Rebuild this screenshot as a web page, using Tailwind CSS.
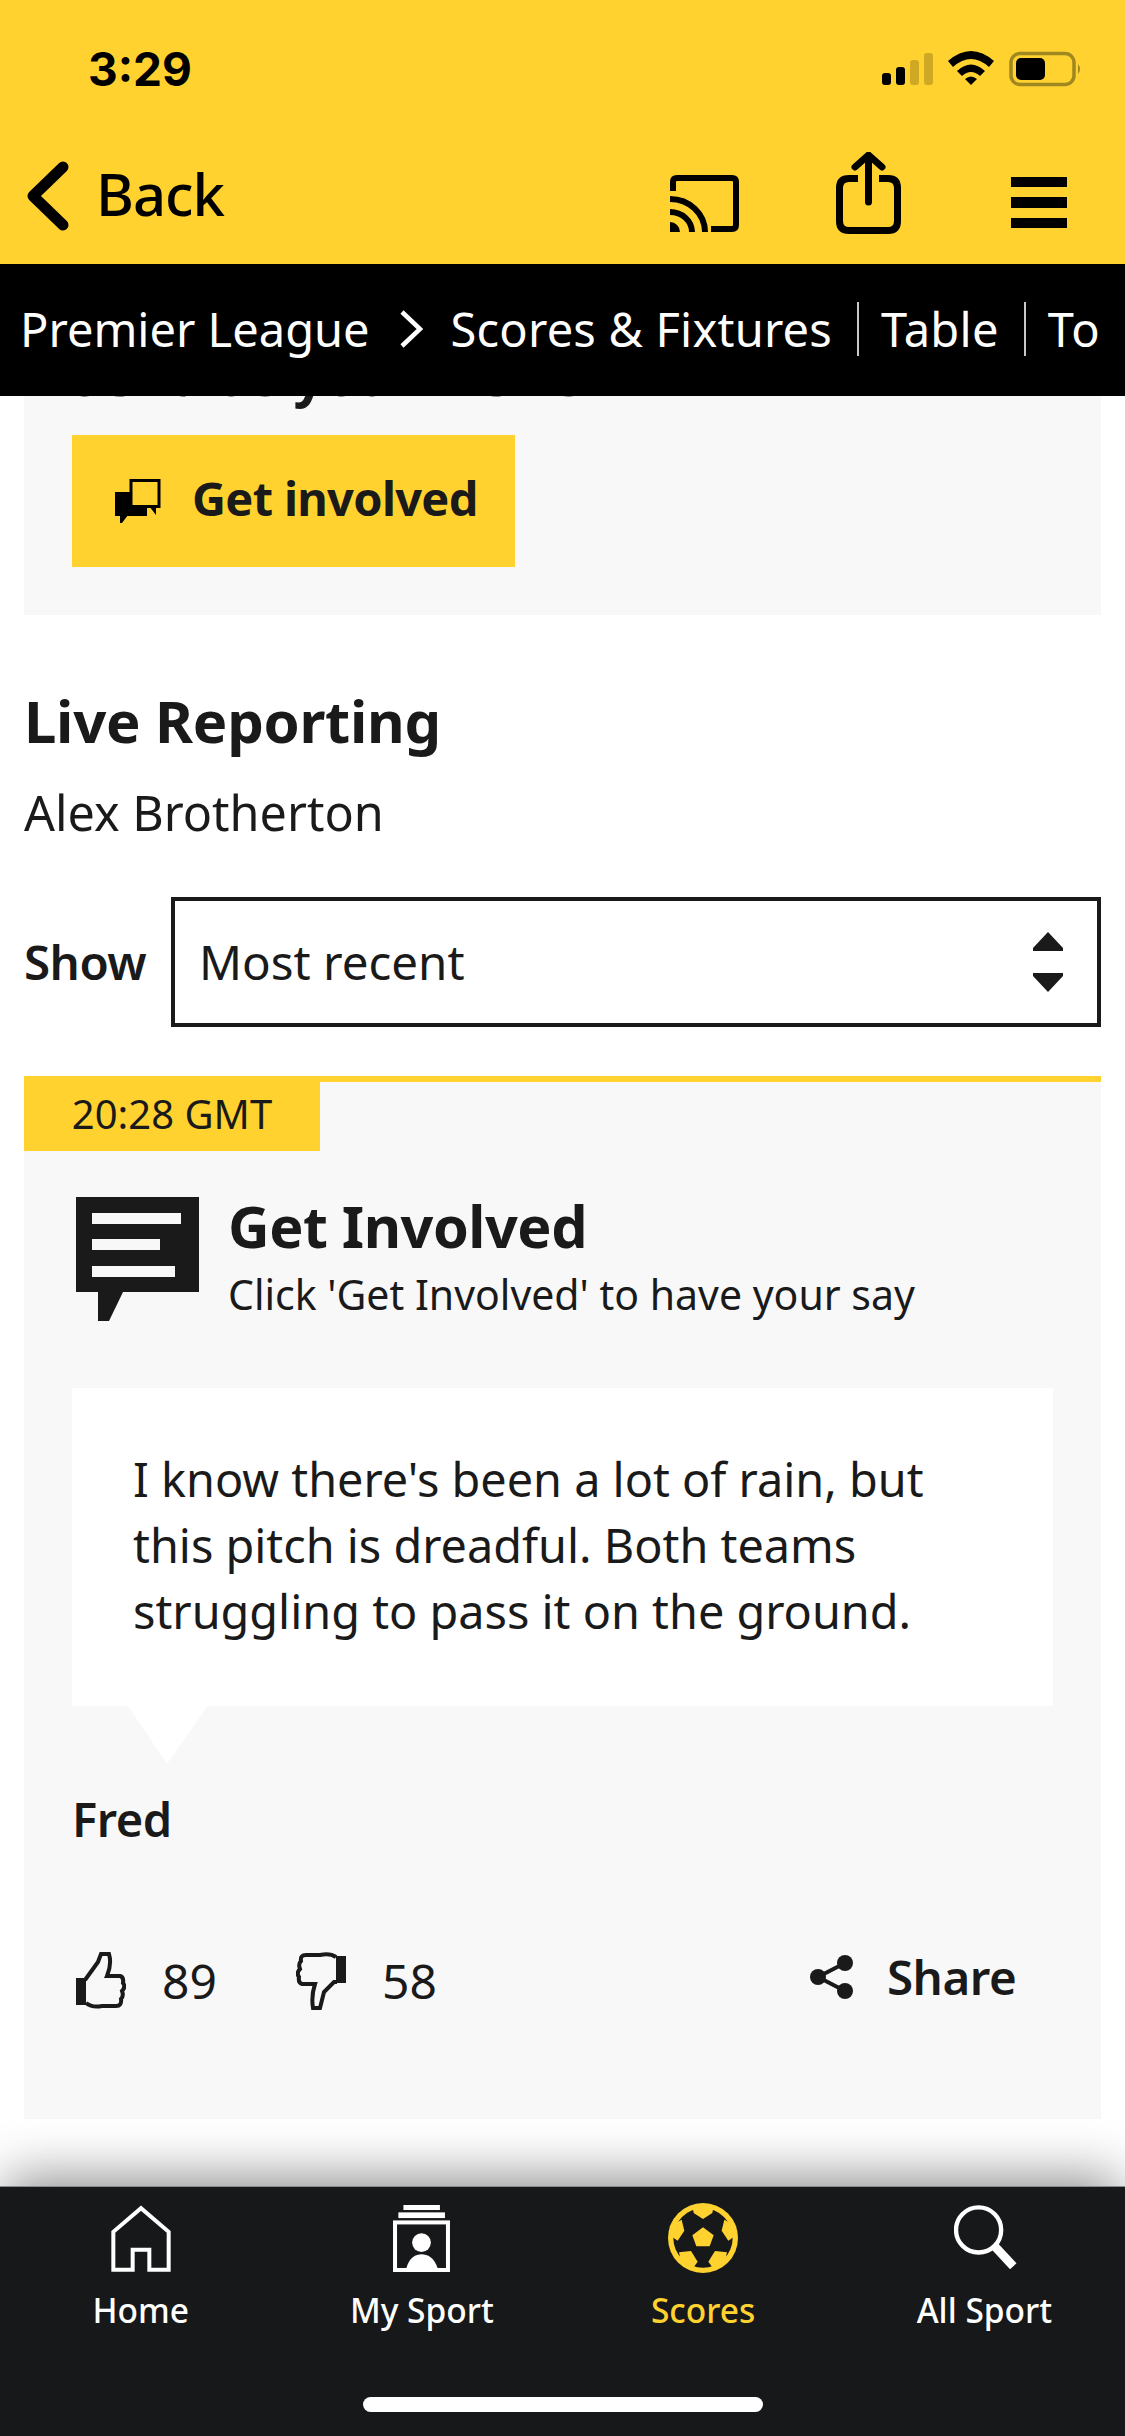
<!DOCTYPE html>
<html lang="en">
  <head>
    <meta charset="UTF-8" />
    <meta name="viewport" content="width=device-width, initial-scale=1.0" />
    <script src="https://cdn.jsdelivr.net/npm/@tailwindcss/browser@4"></script>
    <title>Live Reporting</title>
  </head>
  <body>
    <div class="flex h-[2436px] w-[1125px] flex-col overflow-hidden bg-white font-['Noto_Sans',sans-serif] text-[#1a1a1a]">
      <!-- Yellow app header -->
      <header class="z-20 h-[264px] shrink-0 bg-[#ffd230] text-black">
        <div class="flex h-[132px] items-start justify-between">
          <span class="ml-[88px] mt-[43px] font-['Inter',sans-serif] text-[46px] font-bold leading-[52px]">3:29</span>
          <svg class="mr-[43px] mt-[50px]" width="203" height="38" viewBox="879 50 203 38">
            <rect x="882" y="73" width="9" height="12" rx="3" />
            <rect x="896" y="67" width="9" height="18" rx="3" />
            <rect x="910" y="60" width="9" height="25" rx="3" fill="#cfa924" />
            <rect x="924" y="53" width="9" height="32" rx="3" fill="#cfa924" />
            <path d="M948 61 Q971 41 994 61 L989 67 Q971 51 953 67 Z" />
            <path d="M957 71 Q971 58 985 71 L980 76 Q971 68 962 76 Z" />
            <path d="M965 79 Q971 74 977 79 L971 85 Z" />
            <rect x="1011" y="53.5" width="63" height="31" rx="9" fill="none" stroke="#a08820" stroke-width="3.5" />
            <rect x="1016" y="58" width="29" height="22" rx="5" />
            <path d="M1078 64 Q1082 69 1078 74 Z" fill="#a08820" />
          </svg>
        </div>
        <div class="flex h-[132px] items-start">
          <svg class="ml-[27px] mt-[29px]" width="42" height="70" viewBox="0 0 42 70" fill="none" stroke="black" stroke-width="11" stroke-linecap="round" stroke-linejoin="round">
            <path d="M36 6 L6 35 L36 64" />
          </svg>
          <span class="ml-[27px] mt-[27px] w-[129px] text-[58px] font-medium leading-[70px] tracking-[-1px]">Back</span>
          <svg class="ml-[445px] mt-[43px]" width="70" height="58" viewBox="671 175 70 58">
            <path d="M674 191 V182 Q674 178 678 178 H733 Q737 178 737 182 V225 Q737 229 733 229 H712" fill="none" stroke="black" stroke-width="6" />
            <path d="M671 199 A35 33 0 0 1 706 232" fill="none" stroke="black" stroke-width="6" />
            <path d="M671 212 A22 20 0 0 1 693 232" fill="none" stroke="black" stroke-width="6" />
            <path d="M671 222 A10 10 0 0 1 681 232 H671 Z" />
          </svg>
          <svg class="ml-[96px] mt-[20px]" width="66" height="84" viewBox="838 152 66 84" fill="none" stroke="black" stroke-width="7" stroke-linecap="round" stroke-linejoin="round">
            <path d="M860 178.500 H851 Q841.500 178.500 841.500 188 V221 Q841.500 230.500 851 230.500 H890 Q899.500 230.500 899.500 221 V188 Q899.500 178.500 890 178.500 H881" stroke-linecap="butt" />
            <path d="M870.500 202 V156 M857 167 L870.500 155 L884 167" />
          </svg>
          <div class="ml-[109px] mt-[45px] flex w-[56px] flex-col gap-[10px]">
            <div class="h-[10px] bg-black"></div>
            <div class="h-[11px] bg-black"></div>
            <div class="h-[10px] bg-black"></div>
          </div>
        </div>
      </header>

      <!-- Section breadcrumb -->
      <nav class="z-20 flex h-[132px] shrink-0 items-center whitespace-nowrap bg-black pb-[3px] text-[47px] leading-[60px] text-white">
        <span class="ml-[20px]">Premier League</span>
        <svg class="ml-[29px]" width="24" height="38" viewBox="0 0 24 38" fill="none" stroke="white" stroke-width="4.500">
          <path d="M3 2 L21 19 L3 36" />
        </svg>
        <span class="ml-[28px] tracking-[0.2px]">Scores &amp; Fixtures</span>
        <div class="ml-[25px] h-[54px] w-[2px] bg-[#c8c8c8]"></div>
        <span class="ml-[22px] tracking-[0.3px]">Table</span>
        <div class="ml-[25px] h-[54px] w-[2px] bg-[#c8c8c8]"></div>
        <span class="ml-[22px] tracking-[0.5px]">To</span>
      </nav>

      <main class="min-h-0 flex-1 overflow-hidden">
        <!-- Get involved panel, scrolled under the header -->
        <section class="mx-[24px] -mt-[51px] bg-[#f8f8f8] px-[48px] pb-[48px]">
          <h2 class="text-[54px] font-bold leading-[60px]">Send us your views</h2>
          <button class="mt-[30px] flex h-[132px] w-[443px] items-center bg-[#ffd230]">
            <svg class="ml-[43px]" width="46" height="44" viewBox="0 0 46 44">
              <rect x="0" y="13" width="32" height="24" />
              <path d="M5 36 H13 L7 44 H5 Z" />
              <rect x="16" y="1.500" width="28" height="26" fill="#ffd230" stroke="black" stroke-width="3" />
              <path d="M34 27 H41 V36 Z" />
            </svg>
            <span class="ml-[31px] pb-[6px] text-[47px] font-bold tracking-[-0.7px]">Get involved</span>
          </button>
        </section>

        <h2 class="ml-[24px] mt-[71px] text-[58px] font-bold leading-[70px] tracking-[-0.3px]">Live Reporting</h2>
        <p class="ml-[24px] mt-[26px] text-[48.500px] leading-[60px]">Alex Brotherton</p>

        <div class="mx-[24px] mt-[55px] flex items-center">
          <label class="w-[147px] text-[47.500px] font-semibold leading-[60px] tracking-[-0.5px]">Show</label>
          <div class="flex h-[130px] flex-1 items-center justify-between border-4 border-[#1a1a1a] pl-[24px] pr-[34px]">
            <span class="text-[47.500px] leading-[60px]">Most recent</span>
            <svg width="30" height="60" viewBox="0 0 30 60" fill="#1a1a1a">
              <path d="M15 0 L30 16 V19 H0 V16 Z" />
              <path d="M15 60 L30 44 V41 H0 V44 Z" />
            </svg>
          </div>
        </div>

        <!-- Live entry -->
        <article class="mx-[24px] mt-[49px] h-[1043px] border-t-[6px] border-[#ffd230] bg-[#f8f8f8]">
          <div class="flex h-[69px] w-[296px] items-center justify-center bg-[#ffd230] pb-[6px] text-[40px] leading-[50px]">20:28 GMT</div>

          <div class="ml-[52px] mt-[46px] flex">
            <svg width="124" height="124" viewBox="0 0 124 124" class="shrink-0">
              <path d="M0 0 H123 V95 H47 L33 124 H22 V95 H0 Z" fill="#1a1a1a" />
              <rect x="16" y="16" width="89" height="11" fill="#f8f8f8" />
              <rect x="16" y="42" width="68" height="11" fill="#f8f8f8" />
              <rect x="16" y="69" width="83" height="11" fill="#f8f8f8" />
            </svg>
            <div class="ml-[28px]">
              <h3 class="-mt-[6px] text-[57.500px] font-bold leading-[70px] tracking-[-0.5px]">Get Involved</h3>
              <p class="mt-[8px] text-[41px] leading-[50px]">Click 'Get Involved' to have your say</p>
            </div>
          </div>

          <div class="relative ml-[48px] mt-[67px] h-[318px] w-[981px] bg-white pl-[61px] pt-[58px] text-[46.800px] leading-[66px]">
            <p>I know there's been a lot of rain, but<br />this pitch is dreadful. Both teams<br />struggling to pass it on the ground.</p>
            <svg class="absolute left-[56px] top-[318px]" width="80" height="58" viewBox="0 0 80 58" fill="white">
              <path d="M0 0 H80 L39 58 Z" />
            </svg>
          </div>
          <p class="ml-[48px] mt-[83px] text-[47px] font-semibold leading-[60px] tracking-[-0.5px]">Fred</p>

          <div class="ml-[52px] mt-[102px] flex h-[60px] items-center">
            <svg width="50" height="58" viewBox="0 0 50 58">
              <path d="M9 28 L22 10 L25 2 H33 Q36 12 31 24 H44 Q48 25 47 31 Q50 35 46 39 Q48 44 45 47 Q46 54 40 54 H26 Q16 56 10 51" fill="none" stroke="#1a1a1a" stroke-width="4" />
              <rect x="0" y="26" width="10" height="27" fill="#1a1a1a" />
            </svg>
            <span class="ml-[36px] w-[56px] text-[48px] leading-[60px]">89</span>
            <svg class="ml-[78px]" width="50" height="58" viewBox="0 0 50 58">
              <path d="M41 30 H38 L28 40 L24 56 H17 Q15 44 19 32 H6 Q2 31 3 25 Q0 21 4 17 Q2 12 5 9 Q4 3 10 3 H24 Q34 1 40 5" fill="none" stroke="#1a1a1a" stroke-width="4" />
              <rect x="40" y="4" width="10" height="27" fill="#1a1a1a" />
            </svg>
            <span class="ml-[36px] w-[56px] text-[48px] leading-[60px]">58</span>
            <svg class="ml-[372px] -mt-[8px]" width="44" height="44" viewBox="0 0 44 44" fill="#1a1a1a">
              <circle cx="35" cy="8" r="8" />
              <circle cx="8" cy="22" r="8" />
              <circle cx="35" cy="36" r="8" />
              <path d="M35 8 L8 22 L35 36" fill="none" stroke="#1a1a1a" stroke-width="4" />
            </svg>
            <span class="ml-[33px] -mt-[8px] text-[47.500px] font-semibold leading-[60px] tracking-[-0.5px]">Share</span>
          </div>
        </article>
      </main>

      <!-- Bottom tab bar -->
      <footer class="relative z-20 h-[250px] shrink-0 border-t border-[#8a8a8a] bg-[#16181a] text-[33.500px] font-medium leading-[44px] text-white shadow-[0_-14px_50px_-6px_rgba(0,0,0,0.45)]">
        <div class="grid grid-cols-4">
          <div class="flex h-[148px] flex-col items-center pt-[18px]">
            <svg width="60" height="67" viewBox="150 48 180 200" fill="none" stroke="white" stroke-width="12">
              <path d="M157 242 V128 L240 57 L323 128 V242 H265 V182 H215 V242 Z" />
            </svg>
            <span class="mt-[16px]">Home</span>
          </div>
          <div class="flex h-[148px] flex-col items-center pt-[18px]">
            <svg width="57" height="67" viewBox="1002 48 170 200" fill="white">
              <rect x="1033" y="48" width="109" height="15" />
              <rect x="1018" y="70" width="139" height="17" />
              <rect x="1008" y="100" width="158" height="142" fill="none" stroke="white" stroke-width="12" />
              <circle cx="1087" cy="160" r="28" />
              <path d="M1042 236 C1050 205 1070 195 1087 195 C1105 195 1125 205 1135 236 Z" />
            </svg>
            <span class="mt-[16px]">My Sport</span>
          </div>
          <div class="flex h-[148px] flex-col items-center pt-[16px] text-[#ffd230]">
            <svg width="70" height="70" viewBox="117 42 210 210" fill="#ffd230">
              <circle cx="222" cy="147" r="105" />
              <circle cx="222" cy="147" r="89" fill="#16181a" />
              <path d="M222 115 L254 139 L242 172 H202 L190 139 Z" />
              <path d="M190 50 H254 L250 72 L222 90 L194 72 Z" />
              <path d="M322 112 L320 140 L298 155 L278 125 L286 92 Z" />
              <path d="M122 112 L124 140 L146 155 L166 125 L158 92 Z" />
              <path d="M150 190 L186 186 L206 218 L190 240 L158 225 Z" />
              <path d="M294 190 L258 186 L238 218 L254 240 L286 225 Z" />
            </svg>
            <span class="mt-[15px]">Scores</span>
          </div>
          <div class="flex h-[148px] flex-col items-center pt-[18px]">
            <svg class="ml-[4px]" width="64" height="64" viewBox="970 50 190 190" fill="none" stroke="white">
              <circle cx="1043" cy="124" r="67" stroke-width="13" />
              <path d="M1090 172 L1146 232" stroke-width="26" />
            </svg>
            <span class="mt-[19px]">All Sport</span>
          </div>
        </div>
        <div class="mx-auto mt-[62px] h-[15px] w-[400px] rounded-full bg-white"></div>
      </footer>
    </div>
  </body>
</html>
